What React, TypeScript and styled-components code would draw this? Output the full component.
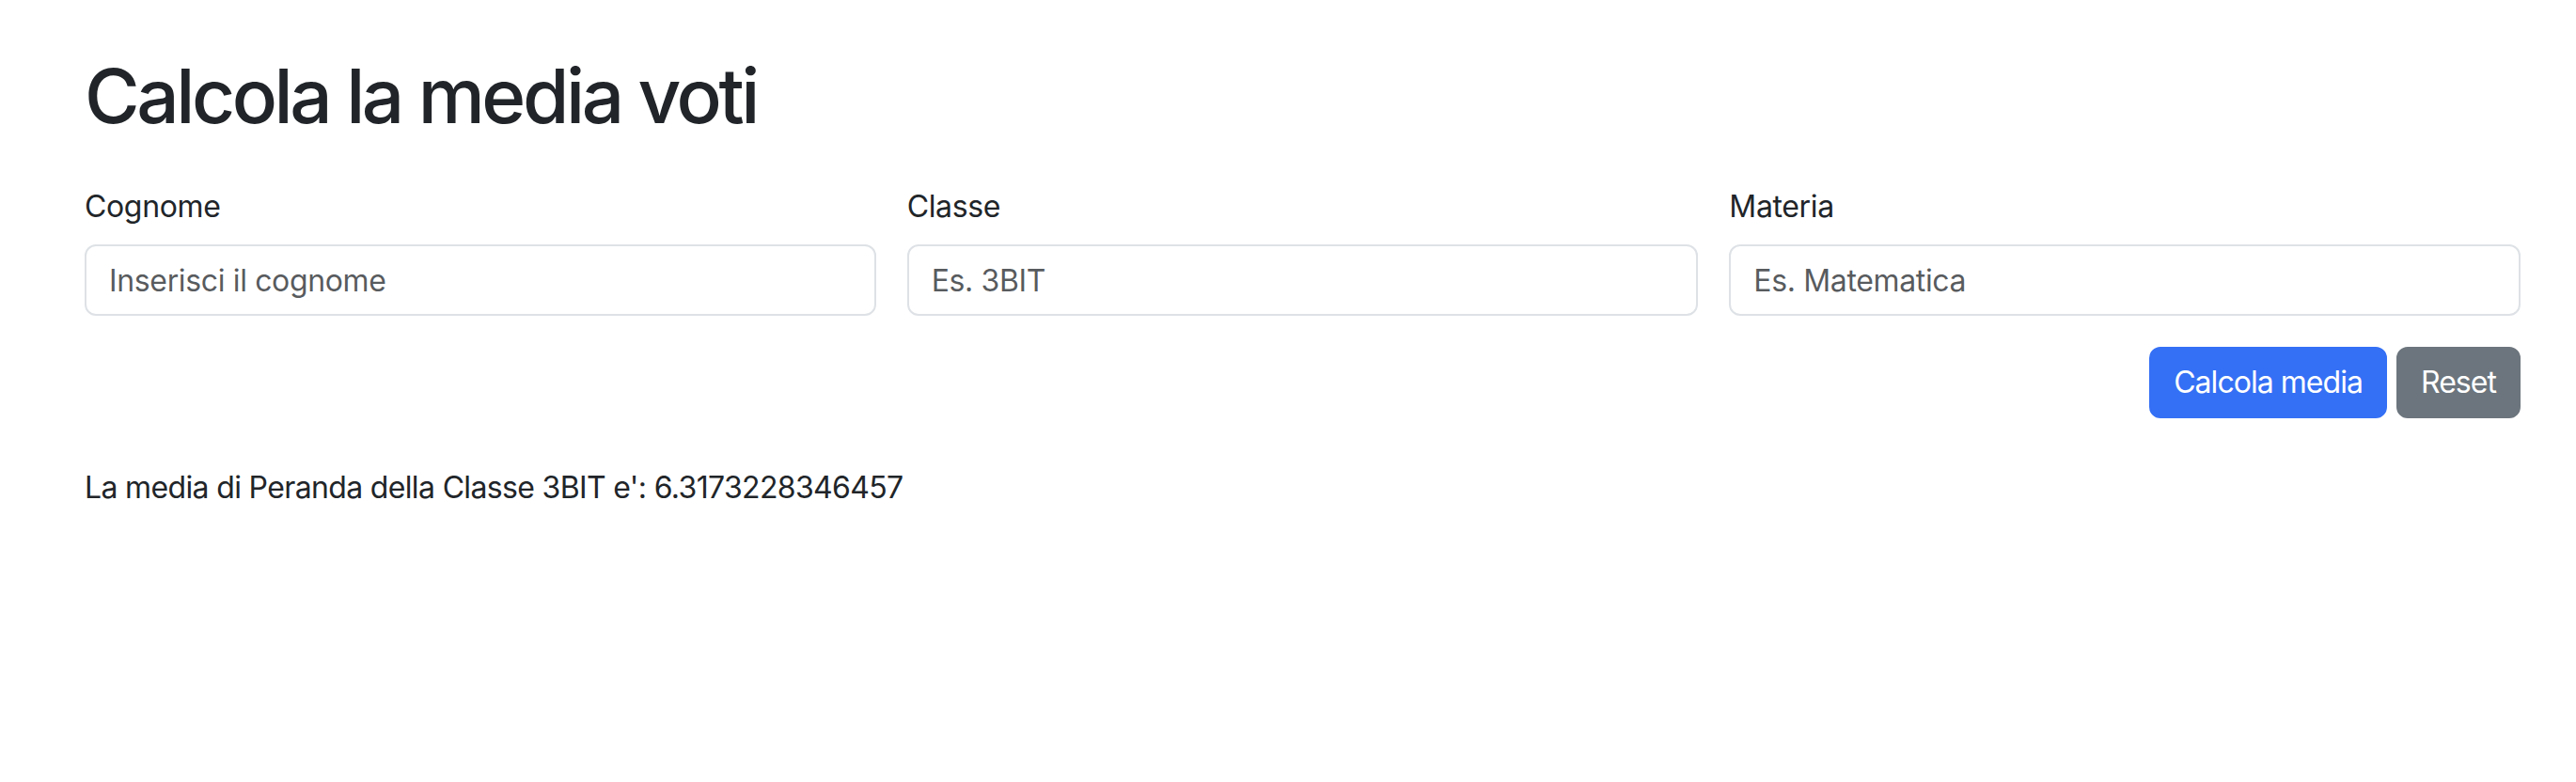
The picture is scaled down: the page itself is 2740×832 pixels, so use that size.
import React, { useState } from "react";
import styled, { createGlobalStyle } from "styled-components";

const GlobalStyle = createGlobalStyle`
  * { box-sizing: border-box; }
  body {
    margin: 0;
    background: #ffffff;
    color: #212529;
    font-family: Inter, "Noto Sans", "Liberation Sans", sans-serif;
    letter-spacing: -0.022em;
  }
`;

const Page = styled.main`
  padding: 54px 59px 0 90px;
`;

const Title = styled.h1`
  margin: 0 0 46px;
  font-size: 80px;
  font-weight: 500;
  line-height: 1.2;
  letter-spacing: -0.043em;
  color: #212529;
`;

const FieldsRow = styled.div`
  display: grid;
  grid-template-columns: repeat(3, 1fr);
  column-gap: 33px;
`;

const Field = styled.div`
  display: flex;
  flex-direction: column;
`;

const Label = styled.label`
  display: block;
  margin-bottom: 16px;
  font-size: 32px;
  line-height: 48px;
  color: #212529;
`;

const Input = styled.input`
  width: 100%;
  height: 76px;
  padding: 12px 24px;
  font-family: inherit;
  font-size: 32px;
  line-height: 48px;
  letter-spacing: inherit;
  color: #212529;
  background: #ffffff;
  border: 2px solid #dee2e6;
  border-radius: 12px;
  outline: none;
  &::placeholder {
    color: rgba(33, 37, 41, 0.75);
  }
`;

const Actions = styled.div`
  display: flex;
  justify-content: flex-end;
  gap: 10px;
  margin-top: 33px;
`;

const Button = styled.button<{ $variant: "primary" | "secondary" }>`
  height: 76px;
  padding: 12px 24px;
  font-family: inherit;
  font-size: 32px;
  line-height: 48px;
  letter-spacing: -0.03em;
  color: #ffffff;
  background: ${(p) => (p.$variant === "primary" ? "#3470f5" : "#6c757d")};
  border: 2px solid ${(p) => (p.$variant === "primary" ? "#3470f5" : "#6c757d")};
  border-radius: 12px;
  cursor: pointer;
`;

const Result = styled.p`
  margin: 50px 0 0;
  font-size: 32px;
  line-height: 48px;
  letter-spacing: -0.65px;
  color: #212529;
`;

export default function App() {
  const [cognome, setCognome] = useState("");
  const [classe, setClasse] = useState("");
  const [materia, setMateria] = useState("");

  return (
    <>
      <GlobalStyle />
      <Page>
        <Title>Calcola la media voti</Title>
        <FieldsRow>
          <Field>
            <Label htmlFor="cognome">Cognome</Label>
            <Input
              id="cognome"
              placeholder="Inserisci il cognome"
              value={cognome}
              onChange={(e) => setCognome(e.target.value)}
            />
          </Field>
          <Field>
            <Label htmlFor="classe">Classe</Label>
            <Input
              id="classe"
              placeholder="Es. 3BIT"
              value={classe}
              onChange={(e) => setClasse(e.target.value)}
            />
          </Field>
          <Field>
            <Label htmlFor="materia">Materia</Label>
            <Input
              id="materia"
              placeholder="Es. Matematica"
              value={materia}
              onChange={(e) => setMateria(e.target.value)}
            />
          </Field>
        </FieldsRow>
        <Actions>
          <Button $variant="primary">Calcola media</Button>
          <Button
            $variant="secondary"
            onClick={() => {
              setCognome("");
              setClasse("");
              setMateria("");
            }}
          >
            Reset
          </Button>
        </Actions>
        <Result>La media di Peranda della Classe 3BIT e': 6.3173228346457</Result>
      </Page>
    </>
  );
}
